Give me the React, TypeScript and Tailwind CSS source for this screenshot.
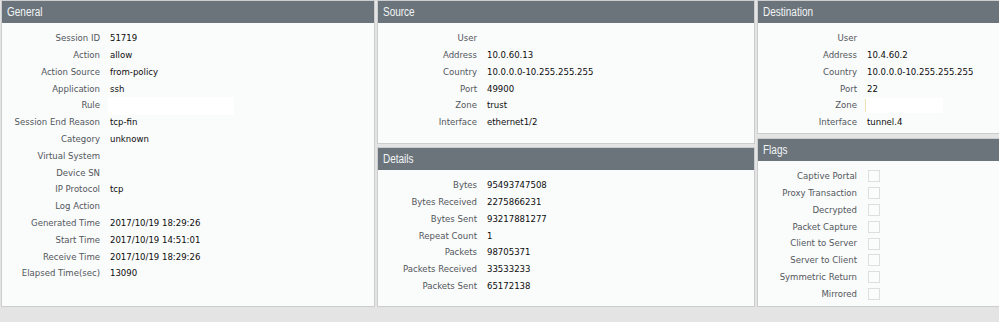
import React from "react";

type Row = { label: string; value?: string; box?: "rule" | "zone" };

const general: Row[] = [
  { label: "Session ID", value: "51719" },
  { label: "Action", value: "allow" },
  { label: "Action Source", value: "from-policy" },
  { label: "Application", value: "ssh" },
  { label: "Rule", box: "rule" },
  { label: "Session End Reason", value: "tcp-fin" },
  { label: "Category", value: "unknown" },
  { label: "Virtual System" },
  { label: "Device SN" },
  { label: "IP Protocol", value: "tcp" },
  { label: "Log Action" },
  { label: "Generated Time", value: "2017/10/19 18:29:26" },
  { label: "Start Time", value: "2017/10/19 14:51:01" },
  { label: "Receive Time", value: "2017/10/19 18:29:26" },
  { label: "Elapsed Time(sec)", value: "13090" },
];

const source: Row[] = [
  { label: "User" },
  { label: "Address", value: "10.0.60.13" },
  { label: "Country", value: "10.0.0.0-10.255.255.255" },
  { label: "Port", value: "49900" },
  { label: "Zone", value: "trust" },
  { label: "Interface", value: "ethernet1/2" },
];

const details: Row[] = [
  { label: "Bytes", value: "95493747508" },
  { label: "Bytes Received", value: "2275866231" },
  { label: "Bytes Sent", value: "93217881277" },
  { label: "Repeat Count", value: "1" },
  { label: "Packets", value: "98705371" },
  { label: "Packets Received", value: "33533233" },
  { label: "Packets Sent", value: "65172138" },
];

const destination: Row[] = [
  { label: "User" },
  { label: "Address", value: "10.4.60.2" },
  { label: "Country", value: "10.0.0.0-10.255.255.255" },
  { label: "Port", value: "22" },
  { label: "Zone", box: "zone" },
  { label: "Interface", value: "tunnel.4" },
];

const flags = [
  "Captive Portal",
  "Proxy Transaction",
  "Decrypted",
  "Packet Capture",
  "Client to Server",
  "Server to Client",
  "Symmetric Return",
  "Mirrored",
];

const bodyFont = {
  fontFamily: '"DejaVu Sans Condensed", "DejaVu Sans", sans-serif',
};

function Panel({
  title,
  className,
  children,
}: {
  title: string;
  className: string;
  children: React.ReactNode;
}) {
  return (
    <div
      className={`flex flex-col border border-[#cbcdce] bg-[#fafbfb] overflow-hidden ${className}`}
    >
      <div className="h-[22px] shrink-0 bg-[#6b747b] pl-[5px] flex items-center">
        <span
          className="inline-block origin-left scale-x-[0.8] text-[12.5px] leading-[22px] text-[#f2f5f7]"
          style={{ fontFamily: '"Liberation Sans", Arial, sans-serif' }}
        >
          {title}
        </span>
      </div>
      <div className="pt-[7px] flex flex-col">{children}</div>
    </div>
  );
}

function Rows({ rows, labelW }: { rows: Row[]; labelW: string }) {
  return (
    <>
      {rows.map((r) => (
        <div
          key={r.label}
          className="flex h-[16.8px] items-center text-[9.5px] whitespace-nowrap"
          style={bodyFont}
        >
          <div className={`${labelW} shrink-0 text-right text-[#52575b]`}>
            {r.label}
          </div>
          <div className="ml-[10px] text-[#0d0d0d] relative flex-1 h-full flex items-center">
            {r.value}
            {r.box === "rule" && (
              <div className="absolute left-[-2px] top-[-0.5px] w-[126px] h-[18px] bg-white" />
            )}
            {r.box === "zone" && (
              <div className="absolute left-[-2px] top-[0.5px] w-[78px] h-[15px] bg-white flex">
                <div className="w-[1px] h-[13px] mt-[1px] bg-[#efe3b5]" />
              </div>
            )}
          </div>
        </div>
      ))}
    </>
  );
}

export default function App() {
  return (
    <div className="w-[999px] h-[322px] bg-[#e4e4e4] overflow-hidden flex pl-[1px]">
      <Panel title="General" className="w-[374px] h-[307px] shrink-0">
        <Rows rows={general} labelW="w-[98px]" />
      </Panel>
      <div className="ml-[2px] w-[378px] shrink-0 flex flex-col gap-[3px]">
        <Panel title="Source" className="h-[144px]">
          <Rows rows={source} labelW="w-[99px]" />
        </Panel>
        <Panel title="Details" className="h-[160px]">
          <Rows rows={details} labelW="w-[99px]" />
        </Panel>
      </div>
      <div className="ml-[2px] w-[250px] shrink-0 flex flex-col gap-[4px]">
        <Panel title="Destination" className="h-[134px]">
          <Rows rows={destination} labelW="w-[99px]" />
        </Panel>
        <Panel title="Flags" className="h-[169px]">
          {flags.map((f) => (
            <div
              key={f}
              className="flex h-[16.8px] items-center text-[9.5px] whitespace-nowrap"
              style={bodyFont}
            >
              <div className="w-[99px] shrink-0 text-right text-[#52575b]">{f}</div>
              <div className="ml-[11px] w-[12px] h-[12px] border border-[#dcdfe0] bg-[#fbfcfc]" />
            </div>
          ))}
        </Panel>
      </div>
    </div>
  );
}
